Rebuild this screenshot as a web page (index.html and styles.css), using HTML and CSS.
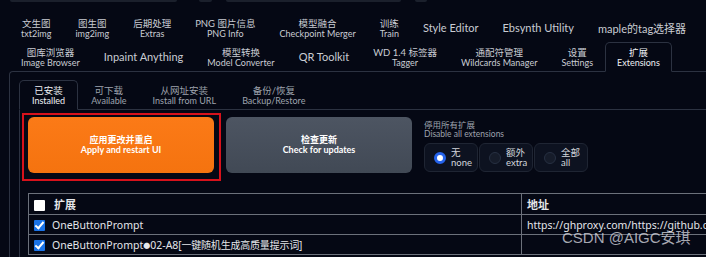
FILE: index.html
```html
<!DOCTYPE html>
<html lang="zh-CN">
  <head>
    <meta charset="UTF-8" />
    <meta name="viewport" content="width=device-width, initial-scale=1.0" />
    <title>Extensions</title>
    <link rel="stylesheet" href="styles.css">
  </head>
  <body>
    <div class="page">
      <!-- bottoms of the inputs scrolled off above -->
      <div class="top-strip">
        <span class="ghost ghost-a"></span>
        <span class="ghost ghost-b"></span>
        <span class="ghost ghost-c"></span>
        <span class="ghost ghost-d"></span>
      </div>

      <nav class="main-tabs">
        <div class="tab-row">
          <button class="tab"><span class="zh">文生图</span><span class="en">txt2img</span></button>
          <button class="tab"><span class="zh">图生图</span><span class="en">img2img</span></button>
          <button class="tab"><span class="zh">后期处理</span><span class="en">Extras</span></button>
          <button class="tab"><span class="zh">PNG 图片信息</span><span class="en">PNG Info</span></button>
          <button class="tab"><span class="zh">模型融合</span><span class="en">Checkpoint Merger</span></button>
          <button class="tab"><span class="zh">训练</span><span class="en">Train</span></button>
          <button class="tab tab-single">Style Editor</button>
          <button class="tab tab-single">Ebsynth Utility</button>
          <button class="tab tab-single">maple的tag选择器</button>
        </div>
        <div class="tab-row">
          <button class="tab"><span class="zh">图库浏览器</span><span class="en">Image Browser</span></button>
          <button class="tab tab-single">Inpaint Anything</button>
          <button class="tab"><span class="zh">模型转换</span><span class="en">Model Converter</span></button>
          <button class="tab tab-single">QR Toolkit</button>
          <button class="tab"><span class="zh">WD 1.4 标签器</span><span class="en">Tagger</span></button>
          <button class="tab"><span class="zh">通配符管理</span><span class="en">Wildcards Manager</span></button>
          <button class="tab"><span class="zh">设置</span><span class="en">Settings</span></button>
          <button class="tab selected"><span class="zh">扩展</span><span class="en">Extensions</span></button>
        </div>
      </nav>

      <section class="panel">
        <nav class="sub-tabs">
          <button class="tab selected"><span class="zh">已安装</span><span class="en">Installed</span></button>
          <button class="tab"><span class="zh">可下载</span><span class="en">Available</span></button>
          <button class="tab"><span class="zh">从网址安装</span><span class="en">Install from URL</span></button>
          <button class="tab"><span class="zh">备份/恢复</span><span class="en">Backup/Restore</span></button>
        </nav>

        <div class="sub-panel">
          <div class="actions">
            <div class="highlight">
              <button class="btn btn-primary">
                <span>应用更改并重启</span>
                <span>Apply and restart UI</span>
              </button>
            </div>
            <button class="btn btn-secondary">
              <span>检查更新</span>
              <span>Check for updates</span>
            </button>

            <div class="disable-group">
              <div class="group-label">
                <span>停用所有扩展</span>
                <span>Disable all extensions</span>
              </div>
              <div class="radios">
                <label class="radio checked">
                  <span class="dot"></span>
                  <span class="radio-text"><span>无</span><span>none</span></span>
                </label>
                <label class="radio">
                  <span class="dot"></span>
                  <span class="radio-text"><span>额外</span><span>extra</span></span>
                </label>
                <label class="radio">
                  <span class="dot"></span>
                  <span class="radio-text"><span>全部</span><span>all</span></span>
                </label>
              </div>
            </div>
          </div>

          <table class="ext-table">
            <colgroup>
              <col class="col-name">
              <col class="col-url">
            </colgroup>
            <thead>
              <tr>
                <th><span class="box"></span>扩展</th>
                <th>地址</th>
              </tr>
            </thead>
            <tbody>
              <tr>
                <td><span class="box on"></span>OneButtonPrompt</td>
                <td>https://ghproxy.com/https://github.com/AIrjen/OneButtonPrompt</td>
              </tr>
              <tr>
                <td><span class="box on"></span>OneButtonPrompt<span class="bullet">●</span>02-A8<span class="note">[一键随机生成高质量提示词]</span></td>
                <td></td>
              </tr>
            </tbody>
          </table>
        </div>
      </section>
    </div>

    <div class="watermark">CSDN @AIGC安琪</div>
  </body>
</html>
```

FILE: styles.css
```css
:root {
  --bg: #050814;
  --line: #2c3241;
  --text: #c9ccd3;
  --text-dim: #9ea3ad;
  --blue: #2563eb;
}

* {
  margin: 0;
  padding: 0;
  box-sizing: border-box;
}

body {
  background: var(--bg);
  color: var(--text);
  font-family: "Lato", "Noto Sans CJK SC", sans-serif;
  overflow: hidden;
  height: 257px;
}

.page {
  width: 780px;
  padding-left: 9px;
}

/* Top leftovers */
.top-strip {
  display: flex;
  height: 2px;
  margin-bottom: 11px;
}

.ghost {
  height: 2px;
  background: #1b202c;
  border-radius: 0 0 3px 3px;
}

.ghost-a { width: 167px; margin-left: 1px; }
.ghost-b { width: 13px; margin-left: 22px; }
.ghost-c { width: 175px; margin-left: 14px; }
.ghost-d { width: 12px; margin-left: 14px; }

/* Tabs */
.tab-row {
  display: flex;
}

.tab {
  height: 29px;
  padding: 2px 11px 0;
  border: 1px solid transparent;
  border-radius: 5px 5px 0 0;
  background: none;
  color: var(--text);
  font-family: inherit;
  display: flex;
  flex-direction: column;
  align-items: center;
  justify-content: center;
  white-space: nowrap;
}

.tab .zh {
  font-size: 9.5px;
  line-height: 10px;
}

.tab .en {
  font-size: 9px;
  line-height: 10px;
}

.tab-single {
  font-size: 11px;
  padding-top: 0;
}

.tab.selected {
  position: relative;
  z-index: 1;
  background: var(--bg);
  border-color: var(--line);
  border-bottom-color: var(--bg);
  color: #eef0f3;
}

.main-tabs .tab-row:last-child {
  margin-bottom: -1px;
}

.main-tabs .tab-row:last-child .tab.selected {
  height: 30px;
}

/* Panels */
.panel {
  border-left: 1px solid var(--line);
  border-top: 1px solid var(--line);
  border-top-left-radius: 4px;
  padding: 8px 0 0 9px;
  height: 200px;
}

.sub-tabs {
  display: flex;
  margin-bottom: -1px;
}

.sub-tabs .tab {
  padding: 2px 12px 0;
  color: var(--text-dim);
}

.sub-tabs .tab.selected {
  color: #eef0f3;
  height: 30px;
}

.sub-panel {
  border-left: 1px solid var(--line);
  border-top: 1px solid var(--line);
  padding: 3px 0 0 2px;
  height: 160px;
}

/* Action buttons */
.actions {
  display: flex;
  align-items: flex-start;
}

.highlight {
  border: 2px solid #d8121b;
  padding: 2px 5px 6px 4px;
}

.btn {
  width: 186px;
  height: 56px;
  border: none;
  border-radius: 6px;
  color: #fff;
  font-family: "Lato", "Noto Sans CJK SC", sans-serif;
  font-weight: 700;
  font-size: 9px;
  line-height: 10px;
  display: flex;
  flex-direction: column;
  align-items: center;
  justify-content: center;
}

.btn-primary {
  background: linear-gradient(#fb7a17, #f5730f);
}

.btn-secondary {
  margin: 4px 0 0 5px;
  background: linear-gradient(#4d5562, #414955);
}

.disable-group {
  margin: 8px 0 0 12px;
}

.group-label {
  display: flex;
  flex-direction: column;
  font-size: 8.5px;
  line-height: 9px;
  color: var(--text-dim);
}

.radios {
  display: flex;
  gap: 1px;
  margin-top: 4px;
}

.radio {
  width: 54px;
  height: 29px;
  border: 1px solid #1f2533;
  border-radius: 6px;
  background: #0d1220;
  display: flex;
  align-items: center;
  padding-left: 9px;
  gap: 5px;
}

.dot {
  width: 12px;
  height: 12px;
  border-radius: 50%;
  background: #161c2a;
  border: 1px solid #273042;
}

.radio.checked .dot {
  background: #fff;
  border: 3px solid var(--blue);
}

.radio-text {
  display: flex;
  flex-direction: column;
  font-size: 9.5px;
  line-height: 10px;
  color: #d3d6dc;
}

/* Table */
.ext-table {
  margin: 12px 0 0 6px;
  border-collapse: collapse;
  table-layout: fixed;
  font-family: "Noto Sans", "Noto Sans CJK SC", sans-serif;
  font-size: 10.5px;
  color: #e4e6ea;
  width: 760px;
}

.col-name {
  width: 493px;
}

.ext-table th,
.ext-table td {
  border: 1px solid #6c717b;
  height: 20px;
  padding: 0 5px;
  text-align: left;
  white-space: nowrap;
  overflow: hidden;
  vertical-align: middle;
}

.ext-table th {
  height: 21px;
  font-weight: 700;
  font-size: 11px;
}

.box {
  display: inline-block;
  width: 11px;
  height: 11px;
  margin-right: 7px;
  vertical-align: -2px;
  background: #fff;
  border-radius: 1px;
}

.box.on {
  background: #1a73e8;
  position: relative;
}

.box.on::after {
  content: "";
  position: absolute;
  left: 3px;
  top: 0;
  width: 3px;
  height: 7px;
  border: solid #fff;
  border-width: 0 2px 2px 0;
  transform: rotate(40deg);
}

.ext-table th .box {
  margin-right: 9px;
}

.bullet {
  font-size: 7px;
  vertical-align: 1px;
}

.note {
  font-size: 10px;
  letter-spacing: -0.2px;
}

/* Watermark */
.watermark {
  position: absolute;
  left: 562px;
  top: 226px;
  font-family: "Liberation Sans", "Noto Sans CJK SC", sans-serif;
  font-size: 15px;
  color: rgba(220, 222, 228, 0.75);
}
```
